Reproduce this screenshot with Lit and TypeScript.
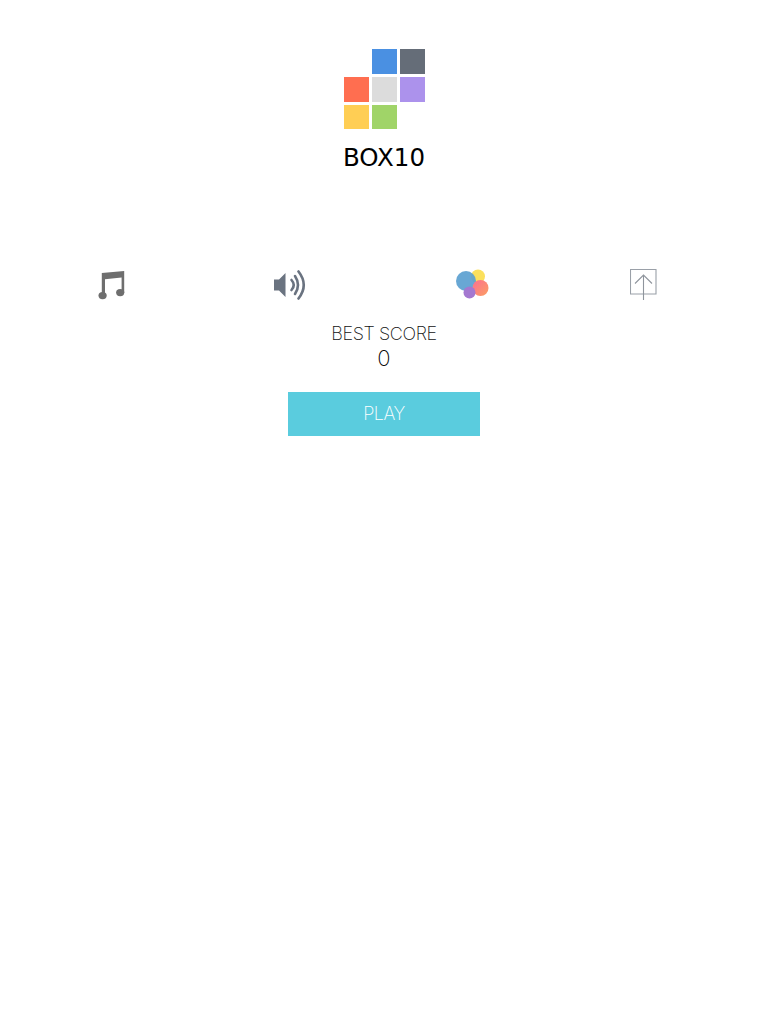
import { LitElement, html, css } from "lit";
import { customElement } from "lit/decorators.js";

@customElement("app-root")
export class AppRoot extends LitElement {
  static styles = css`
    :host { display: block; min-height: 1024px; background: #fff; }
    .page { display: flex; flex-direction: column; align-items: center; padding-top: 49px; }
    .logo { display: grid; grid-template-columns: repeat(3, 24.75px); grid-auto-rows: 24.75px; gap: 3px; width: 80.25px; margin-left: 1px; }
    .logo i { display: block; }
    .blank { visibility: hidden; }
    .blue { background: #4a90e2; }
    .slate { background: #656d78; }
    .red { background: #ff6e50; }
    .grey { background: #dcdcdc; }
    .purple { background: #ac92ec; }
    .yellow { background: #ffce54; }
    .green { background: #a0d468; }
    h1 { margin: 13.25px 0 0; font: 400 24.5px/29px "DejaVu Sans", sans-serif; color: #000; }
    .icons { align-self: stretch; display: grid; grid-template-columns: 176px 183px 174px 28px; padding: 97.5px 0 0 97px; height: 35px; align-items: start; }
    .icons svg { display: block; }
    .label { margin-top: 19px; font: 200 18px/22px Inter, "Liberation Sans", sans-serif; letter-spacing: -0.4px; color: #111; }
    .score { font: 200 22px/26px Inter, "Liberation Sans", sans-serif; color: #000; }
    .play { margin-top: 21px; width: 192px; height: 44px; display: flex; align-items: center; justify-content: center; background: #5accde; color: #fff; font: 200 18px/22px Inter, "Liberation Sans", sans-serif; letter-spacing: -0.5px; }
  `;

  render() {
    return html`<div class="page">
      <div class="logo">
        <i class="blank"></i><i class="blue"></i><i class="slate"></i>
        <i class="red"></i><i class="grey"></i><i class="purple"></i>
        <i class="yellow"></i><i class="green"></i>
      </div>
      <h1>BOX10</h1>
      <div class="icons">
        <svg width="30" height="32" viewBox="0 0 30 32">
          <path fill="#6e6e6e" d="M4.8 4 L27.2 2 V24 H24.6 V8.6 L8 10.2 V27 H4.8 Z"/>
          <ellipse cx="23.2" cy="23.6" rx="4.1" ry="3.6" fill="#6e6e6e"/>
          <ellipse cx="5.6" cy="26.6" rx="4.1" ry="3.6" fill="#6e6e6e"/>
        </svg>
        <svg width="33" height="32" viewBox="0 0 33 32">
          <path fill="#6a7380" d="M1 10.5 H6 L12.5 4 V28 L6 21.5 H1 Z"/>
          <g fill="none" stroke="#6a7380" stroke-width="2.6" stroke-linecap="round">
            <path d="M18.5 11 Q23 16 18.5 21"/>
            <path d="M22 7 Q28 16 22 25"/>
            <path d="M25.5 2.5 Q36 16 25.5 29.5"/>
          </g>
        </svg>
        <svg width="34" height="32" viewBox="0 0 34 32">
          <defs>
            <linearGradient id="pink" x1="0" y1="0" x2="1" y2="1">
              <stop offset="0" stop-color="#fd6f92"/>
              <stop offset="1" stop-color="#fb9f62"/>
            </linearGradient>
          </defs>
          <circle cx="22" cy="7.5" r="7" fill="#fbe05c"/>
          <circle cx="10" cy="12" r="10" fill="#5b9fd0" fill-opacity="0.92"/>
          <circle cx="24.5" cy="19" r="8" fill="url(#pink)"/>
          <circle cx="13.5" cy="23.5" r="6" fill="#a478d0"/>
        </svg>
        <svg width="28" height="33" viewBox="0 0 28 33">
          <path fill="none" stroke="#9aa0a8" stroke-width="1.1" d="M0.5 0.5 H26 V25 H0.5 Z"/>
          <path fill="none" stroke="#8f959d" stroke-width="1.1" d="M13.5 6 V31 M5 14.5 L13.5 6 L22 14.5"/>
        </svg>
      </div>
      <div class="label">BEST SCORE</div>
      <div class="score">0</div>
      <div class="play">PLAY</div>
    </div>`;
  }
}
